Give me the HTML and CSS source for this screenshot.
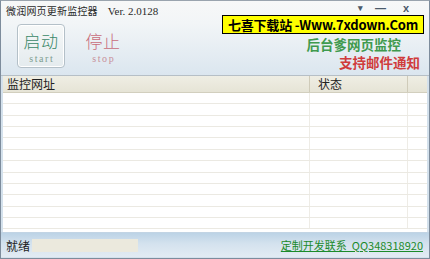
FILE: index.html
```html
<!DOCTYPE html>
<html lang="zh-CN">
<head>
  <meta charset="UTF-8" />
  <title>微润网页更新监控器</title>
  <link rel="stylesheet" href="styles.css">
</head>
<body>
  <div class="window">
    <div class="top">
      <div class="titlebar">
        <span class="title">微润网页更新监控器<span class="ver">Ver. 2.0128</span></span>
        <div class="controls">
          <span class="ctl">&#9662;</span>
          <span class="ctl">&#8212;</span>
          <span class="ctl">x</span>
        </div>
      </div>
      <div class="banner">七喜下载站 -Www.7xdown.Com</div>
      <div class="toolbar">
        <div class="tool start">
          <span class="big">启动</span>
          <span class="small">start</span>
        </div>
        <div class="tool stop">
          <span class="big">停止</span>
          <span class="small">stop</span>
        </div>
        <div class="slogans">
          <span class="green">后台爹网页监控</span>
          <span class="red">支持邮件通知</span>
        </div>
      </div>
    </div>

    <div class="grid">
      <div class="head">
        <div class="cell c1">监控网址</div>
        <div class="cell c2">状态</div>
        <div class="cell c3"></div>
      </div>
      <div class="rows" id="rows"></div>
    </div>

    <div class="statusbar">
      <span class="ready">就绪</span>
      <span class="progress"></span>
      <a class="contact" href="#">定制开发联系 &nbsp;QQ348318920</a>
    </div>
  </div>

  <script>
    const rows = document.getElementById('rows');
    for (let i = 0; i < 12; i++) {
      const row = document.createElement('div');
      row.className = 'row';
      row.innerHTML = '<div class="cell c1"></div><div class="cell c2"></div><div class="cell c3"></div>';
      rows.appendChild(row);
    }
  </script>
</body>
</html>
```

FILE: styles.css
```css
body {
  margin: 0;
  font-family: "Noto Sans CJK SC", "Liberation Sans", sans-serif;
  background: #fff;
}

.window {
  width: 430px;
  height: 259px;
  box-sizing: border-box;
  border: 1px solid #7d8c9c;
  border-top-color: #9aa4ae;
  background: #d4e1ec;
  padding: 0 2px 1px 2px;
  display: flex;
  flex-direction: column;
  overflow: hidden;
}

.top {
  position: relative;
  margin: 0 -2px;
  background: linear-gradient(#f7f8f8, #f2f5f7 30%, #dbe6ef);
  border-bottom: 1px solid #b6bfc6;
}

.titlebar {
  height: 18px;
  display: flex;
  align-items: flex-start;
  justify-content: space-between;
  padding: 0 20px 0 5px;
}

.title {
  font-size: 10px;
  line-height: 16px;
  margin-top: 2px;
  color: #2a2a2a;
  letter-spacing: 0.2px;
}

.ver {
  font-family: "Liberation Serif", serif;
  font-size: 11px;
  letter-spacing: 0;
  margin-left: 10px;
}

.controls {
  display: flex;
  gap: 9px;
  align-items: center;
  height: 12px;
  color: #4a5a6a;
  font-size: 11px;
  line-height: 12px;
  font-family: "Liberation Sans", sans-serif;
  font-weight: bold;
  margin-top: 1px;
}

.ctl:first-child {
  font-size: 9px;
  margin-right: 3px;
}

.ctl:last-child {
  margin-left: 8px;
}

.banner {
  position: absolute;
  left: 221px;
  top: 14px;
  width: 202px;
  height: 19px;
  box-sizing: border-box;
  background: #ffff00;
  border: 1px solid #000;
  font-weight: bold;
  font-size: 13px;
  letter-spacing: -0.2px;
  line-height: 17px;
  text-align: center;
  color: #000;
  white-space: nowrap;
}

.toolbar {
  height: 56px;
  display: flex;
  align-items: flex-start;
  padding: 5px 0 0 16px;
  box-sizing: border-box;
}

.tool {
  width: 48px;
  height: 44px;
  box-sizing: border-box;
  display: flex;
  flex-direction: column;
  align-items: center;
  justify-content: center;
}

.start {
  border: 1px solid #b4c0c8;
  border-radius: 4px;
  background: linear-gradient(#f6f8f8, #e4ebee);
  box-shadow: inset 0 0 0 1px #fff;
}

.stop {
  margin-left: 14px;
}

.big {
  font-size: 17px;
  line-height: 25px;
  font-weight: 300;
  letter-spacing: 0.5px;
}

.small {
  font-family: "Liberation Serif", serif;
  font-size: 10px;
  line-height: 12px;
  letter-spacing: 1.6px;
  margin-right: -1.6px;
}

.start .big { color: #3a8868; }
.start .small { color: #7f9d90; }
.stop .big { color: #c86c7a; }
.stop .small { color: #c8909a; }

.slogans {
  margin-left: auto;
  display: flex;
  flex-direction: column;
  align-items: flex-end;
  padding-top: 11px;
  font-weight: bold;
  font-size: 13.5px;
  line-height: 18px;
}

.slogans .green {
  color: #3f9a4e;
  margin-right: 28px;
}

.slogans .red {
  color: #d03c3c;
  margin-right: 9px;
}

.grid {
  flex: 1;
  background: #fff;
  display: flex;
  flex-direction: column;
}

.head {
  height: 16px;
  display: flex;
  background: linear-gradient(#efeee4, #e6e4d6);
  border-bottom: 1px solid #d2cfbe;
  font-size: 12px;
  line-height: 16px;
  color: #222;
}

.cell {
  box-sizing: border-box;
}

.c1 { width: 307px; padding-left: 4px; }
.c2 { width: 98px; padding-left: 8px; }
.c3 { flex: 1; }

.head .c1,
.head .c2 {
  border-right: 1px solid #cfcbb9;
}

.rows {
  flex: 1;
}

.row {
  height: 11.36px;
  box-sizing: border-box;
  display: flex;
  border-bottom: 1px solid #ebe9e2;
}

.row .c1,
.row .c2 {
  border-right: 1px solid #eeece6;
}

.statusbar {
  height: 24px;
  margin: 0 -2px;
  display: flex;
  align-items: center;
  padding: 0 6px 0 5px;
  background: linear-gradient(#bcd3e6, #d4e2ee 45%, #e2ebf3);
  border-top: 1px solid #c2d4e4;
  font-size: 12px;
}

.ready {
  color: #222;
}

.progress {
  width: 106px;
  height: 13px;
  margin-left: 2px;
  background: #ebe9dd;
}

.contact {
  margin-left: auto;
  font-size: 11px;
  color: #1b8a2a;
  text-decoration: underline;
}
```
